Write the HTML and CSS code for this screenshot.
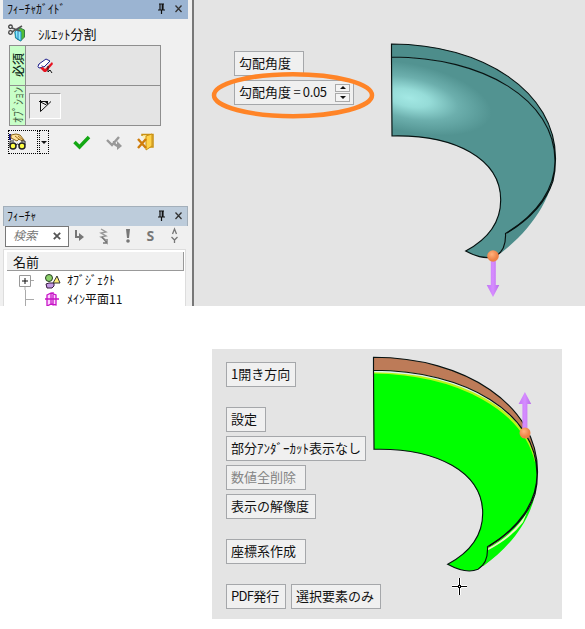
FILE: index.html
```html
<!DOCTYPE html>
<html lang="ja">
<head>
<meta charset="utf-8">
<title>フィーチャガイド</title>
<link rel="stylesheet" href="styles.css">
</head>
<body>
<main class="window">
  <aside class="side">
    <header class="bar bar-active"><span class="bar-title">ﾌｨｰﾁｬｶﾞｲﾄﾞ</span>
      <svg class="bar-tools" viewBox="0 0 28 12"><path d="M3 1h5M4 1v6M7 1v6M6.300 1v6M2 7h7M5.500 7v4" stroke="#111" stroke-width="1.200" fill="none"/><path d="M19.500 2.500l6 6.500M25.500 2.500l-6 6.500" stroke="#333" stroke-width="1.300"/></svg>
    </header>
    <div class="command">
      <svg width="18" height="18" viewBox="0 0 18 18"><path d="M7 8l5-4 4.500 2v7l-4 4-5-3z" fill="#52bd35" stroke="#397b48"/><path d="M7 8l3-3 3 3v9l-5-3z" fill="#8eeaff" stroke="#1592be"/><path d="M10 6v10" stroke="#237cb7"/><path d="M4 4l8 3M4 8l10-6" stroke="#555" stroke-width="1.500"/><circle cx="2.500" cy="2.800" r="1.800" fill="none" stroke="#444" stroke-width="1.300"/><circle cx="2.500" cy="8.500" r="1.800" fill="none" stroke="#444" stroke-width="1.300"/></svg>
      <span>ｼﾙｴｯﾄ分割</span>
    </div>
    <div class="steps">
      <div class="step"><div class="step-label required"><span>必須</span></div>
        <div class="step-body"><svg class="surface" width="18" height="18" viewBox="0 0 18 18"><path d="M2 7l7-5 4 2-6 6q-2-2-5 0z" fill="#fff" stroke="#20208c"/><path d="M2 7q-2 3 0 4l4-1" fill="#fff" stroke="#20208c"/><path d="M3 11l3-1 2 2 7-7 1 2-7 8H7z" fill="#e71321"/><path d="M11 9v6l2-2 2 3" stroke="#111" fill="none"/></svg></div></div>
      <div class="step"><div class="step-label"><span>ｵﾌﾟｼｮﾝ</span></div>
        <div class="step-body"><div class="sunken"><svg width="14" height="14" viewBox="0 0 14 14"><path d="M2.500 1v11.500L13 2.500M1 2.500h8M2.500 3l6 3" fill="none" stroke="#111"/><path d="M6 2h4v4z" fill="#111"/></svg></div></div></div>
    </div>
    <div class="actions">
      <div class="preview"><svg width="18" height="18" viewBox="0 0 18 18"><path d="M0 1h2v6H0z" fill="#171782"/><path d="M2 2l5-1 4 1 4 5-2 1-3-2-2 2-6-3z" fill="#ffe19b" stroke="#876316"/><path d="M6 3l5 4M9 3l5 4" stroke="#a26e16"/><circle cx="4" cy="13" r="3" fill="#ff4" stroke="#222" stroke-width="1.500"/><circle cx="13" cy="13" r="3" fill="#ff4" stroke="#222" stroke-width="1.500"/><path d="M7 12q1.500-2 3 0M1 12V8h4M16 12V8h-4" fill="none" stroke="#222"/></svg></div>
      <div class="drop"><i class="down"></i></div>
      <svg class="ok" width="18" height="15" viewBox="0 0 18 15"><path d="M1.500 7l5 5L16 2" fill="none" stroke="#14a814" stroke-width="3.500"/></svg>
      <svg class="next" width="18" height="15" viewBox="0 0 18 15"><path d="M1 5l5 5 7-8M8 6q0 5 5 5" fill="none" stroke="#999" stroke-width="2.400"/><path d="M11 6l5 5-5 4z" fill="#999"/></svg>
      <svg class="exit" width="18" height="18" viewBox="0 0 18 18"><path d="M5 3V1.500h11V14h-4" fill="#fff0ac" stroke="#c99112" stroke-width="1.500"/><path d="M9 3l6-2v12l-6 4z" fill="#ffd24a" stroke="#c99112"/><path d="M1 6l8 9M9 6l-8 9" stroke="#d07d0b" stroke-width="2.400"/></svg>
    </div>
    <header class="bar bar-idle"><span class="bar-title">ﾌｨｰﾁｬ</span>
      <svg class="bar-tools" viewBox="0 0 28 12"><path d="M3 1h5M4 1v6M7 1v6M6.300 1v6M2 7h7M5.500 7v4" stroke="#111" stroke-width="1.200" fill="none"/><path d="M19.500 2.500l6 6.500M25.500 2.500l-6 6.500" stroke="#333" stroke-width="1.300"/></svg>
    </header>
    <div class="filter">
      <div class="search"><span>検索</span><svg width="8" height="8" viewBox="0 0 8 8"><path d="M.8.800l6.400 6.400M7.200.800L.800 7.200" stroke="#555" stroke-width="1.800"/></svg></div>
      <svg class="filters" width="112" height="18" viewBox="0 0 112 18"><g fill="none" stroke="#777" stroke-width="2"><path d="M4 3v7h6"/><path d="M29 2l5 3-5 1 5 3-5 1 5 3" stroke-width="1.400" stroke="#999"/><path d="M30 10l5 6v-4m0 4h-4" stroke-width="1.300"/><path d="M100.500 7l2-5 2 5M99.500 10l3 3 3-3M102.500 13v3" stroke-width="1.300"/></g><path d="M7 6l5 4-5 4zM54 2h4l-1 9h-2z" fill="#777"/><circle cx="56" cy="14" r="1.800" fill="#777"/><text x="74.500" y="14">S</text></svg>
    </div>
    <section class="tree">
      <div class="tree-head">名前</div>
      <div class="node"><svg width="51" height="19" viewBox="0 0 51 19"><path d="M18 9.500h9M18 15v4" stroke="#aaa"/><path d="M12.500 4.500h11v11h-11z" fill="#fff" stroke="#999"/><path d="M15 10h6M18 7v6" stroke="#111"/><circle cx="42" cy="7" r="3.500" fill="#8cd16a" stroke="#263d21"/><path d="M39 13l3-1h5v3l-2 2h-5z" fill="#c59be5" stroke="#35183d"/><path d="M50 5l3 7h-7z" fill="#ffef7a" stroke="#333"/></svg><span>ｵﾌﾞｼﾞｪｸﾄ</span></div>
      <div class="node"><svg width="51" height="19" viewBox="0 0 51 19"><path d="M18.500 0v19M18 9.500h9" stroke="#aaa"/><path d="M40 5l4-2v11l-4 2zM44 3l5 2v10l-5-1M38 9h14M46 2v15" fill="#ffd4ff" stroke="#c614c6" stroke-width="1.300"/></svg><span>ﾒｲﾝ平面11</span></div>
    </section>
  </aside>
  <section class="canvas canvas-top">
    <svg class="scene" width="391" height="306" viewBox="194 0 391 306">
      <defs>
        <radialGradient id="shine" gradientUnits="userSpaceOnUse" cx="0" cy="0" r="1" gradientTransform="translate(409 98) rotate(12) scale(84 34)"><stop offset="0" stop-color="#a3e8e4"/><stop offset=".25" stop-color="#96dcd8"/><stop offset=".6" stop-color="#6cafad"/><stop offset="1" stop-color="#529391"/></radialGradient>
        <linearGradient id="violet"><stop offset="0" stop-color="#c277f6"/><stop offset=".5" stop-color="#d68cff"/><stop offset="1" stop-color="#b86ce9"/></linearGradient>
        <radialGradient id="ball" cx=".4" cy=".35"><stop offset="0" stop-color="#ffb27d"/><stop offset="1" stop-color="#ee8247"/></radialGradient>
        <path id="rim" d="M391.500 44C483 44 556 92 555.500 159C555 196 532 229 501 253L505.500 233.500C538 214 555 188 555 161C555 100 484 57 391.500 57Z"/>
        <path id="body" d="M391.500 57C484 57 555 100 555 161C555 188 538 214 505.500 233.500C506 244 503 252 496 256Q484 261 465.700 251C490 238 500.700 220 500.700 200C500.700 159 455 134.500 392 136Z"/>
        <g id="edges" fill="none" stroke="#071211" stroke-width="1.150"><path d="M391.500 57V44C483 44 556 92 555.500 159C555.500 169 554.500 175 553 181M391.500 57C484 57 555 100 555 161C555 188 538 214 505.500 233.500C506 244 503 252 496 256Q484 261 465.700 251C490 238 500.700 220 500.700 200C500.700 159 455 134.500 392 136L391.500 57"/><path d="M553 181Q543 211 507 233"/></g>
      </defs>
      <use href="#rim" fill="#4d8d8b"/><use href="#body" fill="url(#shine)"/><use href="#edges"/>
      <path d="M490.800 260h5v25h3.500l-6.300 12-6.300-12h4.100z" fill="url(#violet)"/><circle cx="493" cy="256" r="5.800" fill="url(#ball)"/>
    </svg>
    <div class="stack">
      <div class="label">勾配角度</div>
      <div class="label angle"><span>勾配角度</span><span class="value"> = 0.05</span><span class="spin"><b><i class="up"></i></b><b><i class="down"></i></b></span></div>
    </div>
    <svg class="scene" width="391" height="306" viewBox="194 0 391 306"><ellipse cx="293" cy="95.200" rx="79" ry="21" fill="none" stroke="#ff8427" stroke-width="4.500"/></svg>
  </section>
</main>
<section class="canvas canvas-bottom">
  <svg class="scene" width="350" height="270" viewBox="212 349 350 270">
    <clipPath id="clip"><use href="#body"/></clipPath>
    <g transform="translate(-18 313.300)">
      <use href="#rim" fill="#bd7b58"/>
      <path d="M553 182C546 211 527 234 501 253L505.500 235C528 221 545 203 553 182" fill="#00f900"/>
      <path d="M506 235Q533 220 545 199L541 209Q529 225 506 237z" fill="#f0f5c5"/>
      <use href="#body" fill="#00ff00"/>
      <g clip-path="url(#clip)" fill="none"><path d="M391 58C479 59 543 97 555 148" stroke="#b9f51b" stroke-width="4.500"/><path d="M391 57C482 57 548 98 555 146" stroke="#dcf5ec" stroke-width="4"/></g>
      <use href="#edges"/>
    </g>
    <path d="M522.400 430v-26h-3.800l6.300-12 6.300 12h-3.800v26z" fill="url(#violet)"/><circle cx="525" cy="433" r="5.500" fill="url(#ball)"/>
    <path d="M459.500 578v17M452 586.500h15" stroke="#fff" stroke-width="3"/><path d="M459.500 578v17M452 586.500h15" stroke="#000"/><rect x="458.500" y="585.500" width="2" height="2" fill="#fff" stroke="#000"/>
  </svg>
  <div class="menu">
    <div class="label w70 gap-after">1開き方向</div>
    <div class="label w40">設定</div>
    <div class="label w140">部分ｱﾝﾀﾞｰｶｯﾄ表示なし</div>
    <div class="label w80 off">数値全削除</div>
    <div class="label w90 gap-after">表示の解像度</div>
    <div class="label w80 gap-after">座標系作成</div>
    <div class="pair"><div class="label w60"><span class="latin">PDF</span>発行</div><div class="label w90">選択要素のみ</div></div>
  </div>
</section>
</body>
</html>
```
FILE: styles.css
```css
* { box-sizing: border-box; }
body {
  margin: 0;
  width: 585px;
  height: 629px;
  overflow: hidden;
  background: #fff;
  color: #111;
  font: 13px/1 "Noto Sans CJK JP", sans-serif;
  white-space: nowrap;
}
svg { display: block; flex: none; }
.window { display: flex; height: 306px; overflow: hidden; }
.side {
  width: 194px;
  height: 306px;
  padding-left: 3px;
  background: #f0f0f0;
  border-right: 2px solid #777;
  display: flex;
  flex-direction: column;
  overflow: hidden;
}
.bar { display: flex; align-items: center; justify-content: space-between; width: 185px; flex: none; padding: 0 4px; font-size: 12px; }
.bar-title { letter-spacing: -.2px; }
.bar-active { height: 19px; background: #9bb4d2; padding-bottom: 1px; }
.bar-idle { height: 20px; background: #bdccdb; border: solid #a3afba; border-width: 1px 1px 0; padding: 0 3px 1px; }
.bar-tools { width: 28px; height: 12px; }
.command { display: flex; align-items: center; gap: 12px; height: 26px; padding: 2px 0 0 5px; flex: none; }
.steps { width: 152px; height: 81px; margin-left: 6px; border: 1px solid #8e8e8e; background: #e4e4e4; flex: none; }
.step { display: flex; height: 39px; }
.step + .step { height: 40px; border-top: 1px solid #8e8e8e; }
.step-label { width: 16px; background: #c8ffc8; border-right: 1px solid #8e8e8e; display: flex; align-items: center; justify-content: center; color: #456245; font-size: 12px; }
.step-label span { writing-mode: vertical-rl; text-orientation: sideways; transform: rotate(180deg); }
.step-label.required { color: #112d20; font-size: 12px; font-weight: 500; }
.step-body { padding: 7px 0 0 3px; }
.surface { margin: 4px 0 0 8px; }
.sunken { width: 32px; height: 26px; border: 1px solid; border-color: #999 #fff #fff #999; background: #ececec; display: grid; place-items: center; }
.actions { display: flex; align-items: flex-start; height: 80px; flex: none; padding: 4px 0 0 5px; }
.preview { width: 30px; height: 24px; border: 1px dotted #000; padding-top: 2px; }
.drop { width: 10px; height: 24px; border: 1px dotted #000; display: grid; place-items: center; margin-left: 1px; }
.up, .down { display: block; width: 0; height: 0; border: 3px solid transparent; }
.up { border-top: 0; border-bottom-color: #111; }
.down { border-bottom: 0; border-top-color: #111; }
.ok { margin: 5px 0 0 24px; }
.next { margin: 5px 0 0 15px; }
.exit { margin: 3px 0 0 13px; }
.filter { display: flex; flex: none; height: 23px; padding-left: 2px; }
.search { width: 64px; height: 21px; border: 1px solid #777; background: #fff; display: flex; align-items: center; justify-content: space-between; padding: 0 7px 3px; color: #777; font-style: italic; font-size: 12px; }
.search svg { position: relative; top: 1px; }
.filters { margin: 1px 0 0 3px; }
.filters text { font: bold 14px "Open Sans", sans-serif; fill: #777; }
.tree { width: 183px; height: 60px; border: 1px solid #ddd; border-bottom: 0; background: #fff; padding: 2px 1px 0 3px; overflow: hidden; }
.tree-head { width: 177px; height: 19px; background: #f0f0f0; border: solid #999; border-width: 0 1px 1px 0; padding: 3px 0 0 6px; font-size: 13px; }
.node { display: flex; align-items: center; gap: 9px; height: 19px; font-size: 12px; padding-bottom: 1px; }
.node svg { overflow: visible; }
.canvas { position: relative; background: #e4e4e4; overflow: hidden; }
.canvas-top { width: 391px; height: 306px; }
.canvas-bottom { width: 350px; height: 270px; margin: 43px 0 0 212px; }
.scene { position: absolute; left: 0; top: 0; }
.stack { display: flex; flex-direction: column; gap: 4px; padding: 51px 0 0 40px; }
.label { height: 25px; width: 70px; background: #f0f0f0; border: 1px solid #a5a7aa; padding: 0 4px 2px; display: flex; align-items: center; flex: none; }
.angle { width: 120px; }
.value { white-space: pre; letter-spacing: -.4px; }
.spin { width: 15px; height: 18px; margin: 2px -1px 0 auto; display: flex; flex-direction: column; gap: 1px; }
.spin b { flex: 1; border: 1px solid #aaa; background: #f4f4f4; display: grid; place-items: center; }
.menu { display: flex; flex-direction: column; gap: 4px; padding: 13px 0 0 14px; }
.gap-after { margin-bottom: 16px; }
.pair { display: flex; gap: 5px; }
.off { color: #858585; }
.latin { letter-spacing: -.7px; }
.w40 { width: 40px; }
.w60 { width: 60px; }
.w80 { width: 80px; }
.w90 { width: 90px; }
.w140 { width: 140px; }
```
